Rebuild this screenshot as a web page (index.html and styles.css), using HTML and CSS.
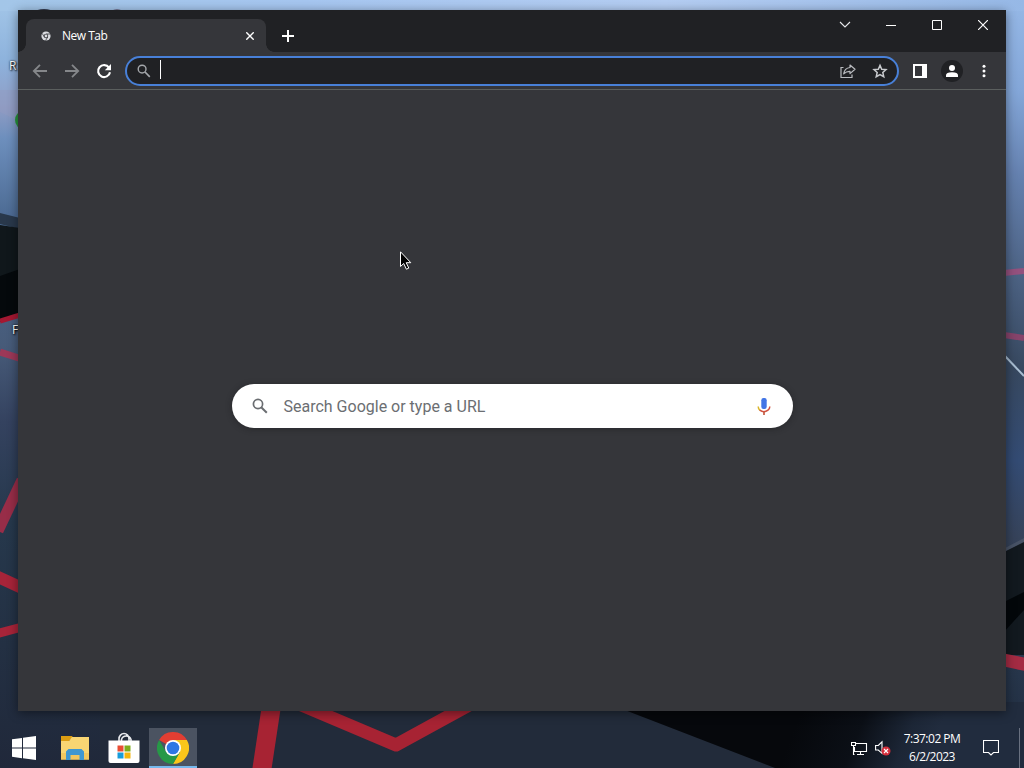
FILE: index.html
```html
<!DOCTYPE html>
<html lang="en">
<head>
  <meta charset="UTF-8">
  <meta name="viewport" content="width=device-width, initial-scale=1.0">
  <title>New Tab</title>
  <link rel="stylesheet" href="styles.css">
</head>
<body>
  <div class="desktop">
    <svg class="wallpaper" viewBox="0 0 1024 768" preserveAspectRatio="none">
      <defs>
        <linearGradient id="top" x1="0" y1="0" x2="1" y2="0">
          <stop offset="0" stop-color="#a3c6e8"/>
          <stop offset=".3" stop-color="#a6c6f0"/>
          <stop offset=".65" stop-color="#b4cdf2"/>
          <stop offset="1" stop-color="#96b8e6"/>
        </linearGradient>
        <linearGradient id="left" x1="0" y1="0" x2="0" y2="1">
          <stop offset="0" stop-color="#a3c6e8"/>
          <stop offset=".08" stop-color="#8db2dc"/>
          <stop offset=".14" stop-color="#8f9cc4"/>
          <stop offset=".18" stop-color="#6d8fbd"/>
          <stop offset=".29" stop-color="#4a6890"/>
          <stop offset=".45" stop-color="#475b79"/>
          <stop offset=".55" stop-color="#34425f"/>
          <stop offset=".68" stop-color="#26384c"/>
          <stop offset="1" stop-color="#20283a"/>
        </linearGradient>
        <linearGradient id="right" x1="0" y1="0" x2="0" y2="1">
          <stop offset="0" stop-color="#96b8e6"/>
          <stop offset=".12" stop-color="#83a6d8"/>
          <stop offset=".23" stop-color="#6480ae"/>
          <stop offset=".36" stop-color="#4c6283"/>
          <stop offset=".48" stop-color="#37485f"/>
          <stop offset=".6" stop-color="#334b73"/>
          <stop offset=".7" stop-color="#36435a"/>
          <stop offset=".88" stop-color="#26354a"/>
          <stop offset="1" stop-color="#202a3c"/>
        </linearGradient>
        <linearGradient id="shade" gradientUnits="userSpaceOnUse" x1="800" y1="715" x2="925" y2="765">
          <stop offset="0" stop-color="#06080c"/>
          <stop offset=".45" stop-color="#0b0f16"/>
          <stop offset=".8" stop-color="#1c2636"/>
          <stop offset="1" stop-color="#212c3e"/>
        </linearGradient>
      </defs>
      <rect width="1024" height="768" fill="#222b3a"/>
      <rect width="100" height="768" fill="url(#left)"/>
      <rect x="1004" width="20" height="768" fill="url(#right)"/>
      <rect width="1024" height="11" fill="url(#top)"/>
      <ellipse cx="44" cy="12" rx="9" ry="3" fill="#343b50"/>
      <ellipse cx="117" cy="12" rx="7" ry="2.5" fill="#4a2d48"/>
      <path d="M0 112 L20 122 V90 H0Z" fill="#929bc2" opacity=".45"/>
      <path d="M0 213 L20 218 V229 L0 224Z" fill="#29384b"/>
      <path d="M0 225 L20 228 V316 L0 322Z" fill="#10171b"/>
      <path d="M0 276 L20 269 V316 L0 320Z" fill="#05090c"/>
      <path d="M0 321 L20 315" stroke="#a41832" stroke-width="5"/>
      <path d="M0 352 L22 359" stroke="#9c3858" stroke-width="7"/>
      <path d="M-2 531 L22 480" stroke="#982d48" stroke-width="11"/>
      <path d="M-4 576 L22 588" stroke="#a72439" stroke-width="12"/>
      <path d="M-4 634 L22 627" stroke="#a72439" stroke-width="9"/>
      <path d="M1004 273 L1024 271" stroke="#94517e" stroke-width="6"/>
      <path d="M1004 335 L1024 338" stroke="#87446b" stroke-width="6"/>
      <path d="M1005 356 L1024 376" stroke="#a9bed2" stroke-width="2"/>
      <path d="M1005 548 L1024 538 V546 L1005 557Z" fill="#485366"/>
      <path d="M1004 552 L1024 542 V655 H1004Z" fill="#12191f"/>
      <path d="M1004 602 L1024 592 V610 L1004 632Z" fill="#03070a"/>
      <path d="M1004 660 L1028 665" stroke="#a42b43" stroke-width="13"/>
      <path d="M604 702 L775 768 H1024 V702Z" fill="url(#shade)"/>
      <path d="M272 702 L261 775" stroke="#a72333" stroke-width="19"/>
      <path d="M285 698 L396 745 L480 699" fill="none" stroke="#a72333" stroke-width="13" stroke-linejoin="round"/>
    </svg>

    <div class="icon-label label-r">R</div>
    <div class="icon-label label-f">F</div>
    <div class="icon-edge"></div>

    <div class="window">
      <div class="tabstrip">
        <div class="tab">
          <svg class="favicon" width="10" height="10" viewBox="0 0 10 10">
            <circle cx="5" cy="5" r="4.6" fill="#dadce0"/>
            <path d="M5 3h4.3M3.3 6 1.2 2.4M6.7 6 4.6 9.5" stroke="#35363a" stroke-width=".8"/>
            <circle cx="5" cy="5" r="2.2" fill="#35363a"/>
            <circle cx="5" cy="5" r="1.4" fill="#dadce0"/>
          </svg>
          <span class="tab-title">New Tab</span>
          <svg class="tab-close" width="8" height="8" viewBox="0 0 8 8"><path d="M.3.3l7.4 7.4M7.7.3L.3 7.7" stroke="#fff" stroke-width="1.4"/></svg>
        </div>
        <svg class="new-tab" width="12" height="12" viewBox="0 0 12 12"><path d="M6 0v12M0 6h12" stroke="#fff" stroke-width="2"/></svg>
        <div class="window-controls">
          <span><svg width="12" height="12" viewBox="0 0 12 12"><path d="M1 3l5 5 5-5" fill="none" stroke="#e8eaed" stroke-width="1.1"/></svg></span>
          <span><svg width="10" height="10" viewBox="0 0 10 10"><path d="M0 5.5h10" stroke="#fff"/></svg></span>
          <span><svg width="10" height="10" viewBox="0 0 10 10"><path d="M.5.5h9v9h-9z" fill="none" stroke="#fff"/></svg></span>
          <span><svg width="10" height="10" viewBox="0 0 10 10"><path d="M0 0l10 10M10 0L0 10" stroke="#fff" stroke-width="1.2"/></svg></span>
        </div>
      </div>

      <div class="toolbar">
        <div class="nav-btn"><svg width="16" height="16" viewBox="0 0 16 16"><path d="M15 8H2.2M8 1.8L1.8 8 8 14.2" fill="none" stroke="#85878a" stroke-width="1.8"/></svg></div>
        <div class="nav-btn"><svg width="16" height="16" viewBox="0 0 16 16"><path d="M1 8h12.8M8 1.8L14.2 8 8 14.2" fill="none" stroke="#85878a" stroke-width="1.8"/></svg></div>
        <div class="nav-btn"><svg width="16" height="16" viewBox="0 0 16 16"><path d="M13 4.6A6 6 0 1 0 14 9.2" fill="none" stroke="#fff" stroke-width="2.1"/><path d="M15 1v6.2H8.8z" fill="#fff"/></svg></div>
        <div class="omnibox">
          <svg width="14" height="14" viewBox="0 0 14 14"><circle cx="5.1" cy="5.1" r="3.9" fill="none" stroke="#a4a7ab" stroke-width="1.4"/><path d="M8 8l4.8 4.8" stroke="#a4a7ab" stroke-width="1.7"/></svg>
          <span class="caret"></span>
          <svg class="share" width="16" height="16" viewBox="0 0 16 16"><path d="M3.5 4.5H1v10h11v-3" fill="none" stroke="#b9bbbf" stroke-width="1.2"/><path d="M10 2l5 4.3-5 4.3V8.3Q6.5 8.1 3.7 10.9Q4.5 5 10 4.5z" fill="none" stroke="#b9bbbf" stroke-width="1.2" stroke-linejoin="round"/></svg>
          <svg width="16" height="16" viewBox="0 0 16 16"><path d="M8 2.3l1.7 3.9 4.3.4-3.2 2.9.95 4.2L8 11.5l-3.75 2.2.95-4.2L2 6.6l4.3-.4z" fill="none" stroke="#c8cacd" stroke-width="1.5"/></svg>
        </div>
        <div class="nav-btn side"><svg width="14" height="14" viewBox="0 0 14 14"><path d="M1 1h12v12H1z" fill="none" stroke="#fff" stroke-width="2"/><path d="M9 1h4v12H9z" fill="#fff"/></svg></div>
        <div class="nav-btn"><div class="avatar"><svg width="12" height="12" viewBox="0 0 12 12"><circle cx="6" cy="3" r="3" fill="#fff"/><path d="M0 12V10.2Q0 7.2 6 7.2T12 10.2V12z" fill="#fff"/></svg></div></div>
        <div class="nav-btn"><svg width="4" height="14" viewBox="0 0 4 14"><g fill="#fff"><circle cx="2" cy="2.2" r="1.5"/><circle cx="2" cy="7" r="1.5"/><circle cx="2" cy="11.8" r="1.5"/></g></svg></div>
      </div>

      <div class="page">
        <div class="search-box">
          <svg width="16" height="16" viewBox="0 0 16 16"><circle cx="6" cy="6" r="4.6" fill="none" stroke="#6a6d71" stroke-width="1.7"/><path d="M9.2 9.2l5.6 5.6" stroke="#6a6d71" stroke-width="2"/></svg>
          <span class="search-text">Search Google or type a URL</span>
          <svg class="mic" width="14" height="18" viewBox="0 0 14 18">
            <rect x="4.3" y="0" width="5.4" height="11" rx="2.2" fill="#4275e6"/>
            <path d="M1.2 8.5Q1.2 11 3 12.3" fill="none" stroke="#d9b52a" stroke-width="1.5"/>
            <path d="M2.7 12.1Q7 15.3 11 12.1Q12.8 10.8 12.8 8.5" fill="none" stroke="#d1513f" stroke-width="1.5"/>
            <path d="M7 13.5V17" stroke="#c45c43" stroke-width="1.7"/>
          </svg>
        </div>
      </div>
    </div>

    <svg class="cursor" width="12" height="19" viewBox="0 0 12 19"><path d="M.5.8v14.7l3.2-3 2.7 5.7 2.4-1.1-2.6-5.4h4.6z" fill="#000" stroke="#fff"/></svg>

    <div class="taskbar">
      <div class="task"><svg width="24" height="24" viewBox="0 0 24 24"><path d="M0 3.3l10-1.4v9.6H0zM11 1.7L24 0v11.5H11zM0 12.5h10v9.7L0 20.8zM11 12.5h13V24l-13-1.7z" fill="#fff"/></svg></div>
      <div class="task">
        <svg width="28" height="24" viewBox="0 0 28 24">
          <path d="M0 0h11l2 3h-3L8 5H0z" fill="#dc9d12"/>
          <path d="M0 5h8l3-4h17v22.5H0z" fill="#f8d573"/>
          <path d="M0 17h28v6.5H0z" fill="#f2c75f"/>
          <path d="M5 24V15.5L7.5 13h13l2.5 2.5V24h-4.5v-5h-9v5z" fill="#3f97d1"/>
        </svg>
      </div>
      <div class="task">
        <svg class="store" width="32" height="32" viewBox="0 0 32 32">
          <path d="M11 10V7a5 5.5 0 0 1 10 0v3M13.5 10V7.5a5 5 0 0 1 9.5 0V10" fill="none" stroke="#e8eaed" stroke-width="1.6"/>
          <path d="M.5 8.5h31V29q0 2-2 2h-27q-2 0-2-2z" fill="#fff"/>
          <path d="M9.5 13.5h6v6h-6z" fill="#e94c34"/><path d="M16.5 13.5h6v6h-6z" fill="#7eac1c"/>
          <path d="M9.5 20.5h6v6h-6z" fill="#189cdb"/><path d="M16.5 20.5h6v6h-6z" fill="#f4b50e"/>
        </svg>
      </div>
      <div class="task active">
        <svg width="32" height="32" viewBox="0 0 32 32">
          <path d="M16 16L2.14 8A16 16 0 0 1 29.86 8z" fill="#e23e32"/>
          <path d="M29.86 8A16 16 0 0 1 16 32L22.93 20 16 8z" fill="#fbc61a"/>
          <path d="M2.14 8A16 16 0 0 0 16 32L22.93 20 9.07 20z" fill="#279847"/>
          <circle cx="16" cy="16" r="8" fill="#fff"/>
          <circle cx="16" cy="16" r="6.3" fill="#2f76e4"/>
        </svg>
      </div>
      <div class="tray">
        <svg width="17" height="15" viewBox="0 0 17 15"><path d="M5 2.5h10.5v8H3.5V6M9.5 10.5v3M6 13.5h7M.5 1.5h4v3h-4zM2.5 4.5v9h1" fill="none" stroke="#fff" stroke-width="1.1"/></svg>
        <svg class="volume" width="17" height="16" viewBox="0 0 17 16"><path d="M.6 5.5h2.7L7 1.8v11.5L3.3 10H.6z" fill="none" stroke="#fff" stroke-width="1.1"/><circle cx="11" cy="11" r="4.5" fill="#d52f3c"/><path d="M9 9l4 4M13 9l-4 4" stroke="#fff" stroke-width="1.1"/></svg>
        <div class="clock"><div class="time">7:37:02 PM</div><div class="date">6/2/2023</div></div>
        <svg class="notify" width="16" height="16" viewBox="0 0 16 16"><path d="M.5.5h15v12h-5L8 15l-2.5-2.5h-5z" fill="none" stroke="#fff" stroke-width="1.1"/></svg>
        <div class="show-desktop"></div>
      </div>
    </div>
  </div>
</body>
</html>
```

FILE: styles.css
```css
* {
  box-sizing: border-box;
}
body {
  margin: 0;
  overflow: hidden;
  font-family: "Open Sans", "Noto Sans", sans-serif;
  font-size: 12px;
  color: #fff;
}
svg {
  display: block;
  flex-shrink: 0;
}
.desktop {
  position: relative;
  width: 1024px;
  height: 768px;
  overflow: hidden;
}
.wallpaper {
  position: absolute;
  inset: 0;
  width: 100%;
  height: 100%;
}

/* desktop icons peeking out behind the window */
.icon-label {
  position: absolute;
  line-height: 16px;
  text-shadow: 1px 1px 2px #000, 0 0 2px #000;
}
.label-r {
  left: 9px;
  top: 58px;
}
.label-f {
  left: 12px;
  top: 322px;
}
.icon-edge {
  position: absolute;
  left: 15px;
  top: 111px;
  width: 16px;
  height: 18px;
  border-radius: 50%;
  background: #28963d;
}

/* browser window */
.window {
  position: absolute;
  left: 18px;
  top: 10px;
  width: 988px;
  height: 701px;
  display: flex;
  flex-direction: column;
  background: #35363a;
  box-shadow: 0 2px 10px rgba(0, 0, 0, .45);
}
.tabstrip {
  height: 42px;
  display: flex;
  background: #202124;
  padding-left: 8px;
}
.tab {
  position: relative;
  width: 240px;
  margin-top: 9px;
  padding: 0 12px 0 15px;
  display: flex;
  align-items: center;
  background: #35363a;
  border-radius: 8px 8px 0 0;
}
/* curved feet of the active tab */
.tab::before,
.tab::after {
  content: "";
  position: absolute;
  bottom: 0;
  width: 8px;
  height: 8px;
}
.tab::before {
  left: -8px;
  background: radial-gradient(circle at 0 0, transparent 7.5px, #35363a 8px);
}
.tab::after {
  right: -8px;
  background: radial-gradient(circle at 100% 0, transparent 7.5px, #35363a 8px);
}
.tab-title {
  margin-left: 11px;
  flex: 1;
  letter-spacing: -.5px;
}
.new-tab {
  margin: 20px 0 0 16px;
}
.window-controls {
  margin-left: auto;
  display: flex;
  height: 30px;
}
.window-controls span {
  width: 46px;
  display: flex;
  align-items: center;
  justify-content: center;
}
.toolbar {
  height: 38px;
  display: flex;
  align-items: center;
  padding-left: 6px;
  border-bottom: 1px solid #5b5f5e;
}
.nav-btn {
  width: 32px;
  display: flex;
  justify-content: center;
}
.side {
  margin-left: 5px;
}
.omnibox {
  width: 774px;
  height: 30px;
  margin-left: 5px;
  padding: 0 9px 0 10px;
  display: flex;
  align-items: center;
  background: #202124;
  border: 2px solid #4880d8;
  border-radius: 15px;
}
.caret {
  width: 1px;
  height: 19px;
  margin: 0 0 3px 9px;
  background: #fff;
}
.share {
  margin: 0 16px 0 auto;
}
.avatar {
  width: 22px;
  height: 22px;
  border-radius: 50%;
  background: #202124;
  display: flex;
  align-items: center;
  justify-content: center;
}
.page {
  flex: 1;
  display: flex;
  justify-content: center;
  align-items: flex-start;
}
.search-box {
  width: 561px;
  height: 44px;
  margin-top: 294px;
  padding: 0 22px 0 20px;
  display: flex;
  align-items: center;
  background: #fff;
  border-radius: 22px;
  box-shadow: 0 1px 6px rgba(20, 20, 22, .4);
}
.search-text {
  margin-left: 16px;
  font: 16px Roboto, sans-serif;
  color: #6b6e72;
}
.mic {
  margin: 2px 0 0 auto;
}
.cursor {
  position: absolute;
  left: 400px;
  top: 251px;
}

/* taskbar */
.taskbar {
  position: absolute;
  left: 0;
  right: 0;
  bottom: 0;
  height: 40px;
  display: flex;
}
.task {
  width: 48px;
  height: 40px;
  display: flex;
  align-items: center;
  justify-content: center;
}
.task:nth-child(2) {
  width: 54px;
}
.task:nth-child(3) {
  width: 43px;
}
.store {
  margin-bottom: 1px;
}
.active {
  margin-left: 4px;
  padding-top: 1px;
  background: #4b5361;
  border-bottom: 2px solid #76b9ed;
}
.task:first-child {
  justify-content: flex-start;
  padding-left: 12px;
}
.tray {
  margin-left: auto;
  display: flex;
  align-items: center;
}
.volume {
  margin-left: 7px;
}
.clock {
  width: 58px;
  margin: 0 22px 0 11px;
  text-align: center;
  line-height: 18px;
  letter-spacing: -.5px;
  white-space: nowrap;
}
.notify {
  margin-right: 20px;
}
.show-desktop {
  width: 5px;
  height: 40px;
  border-left: 1px solid #697180;
}
```
